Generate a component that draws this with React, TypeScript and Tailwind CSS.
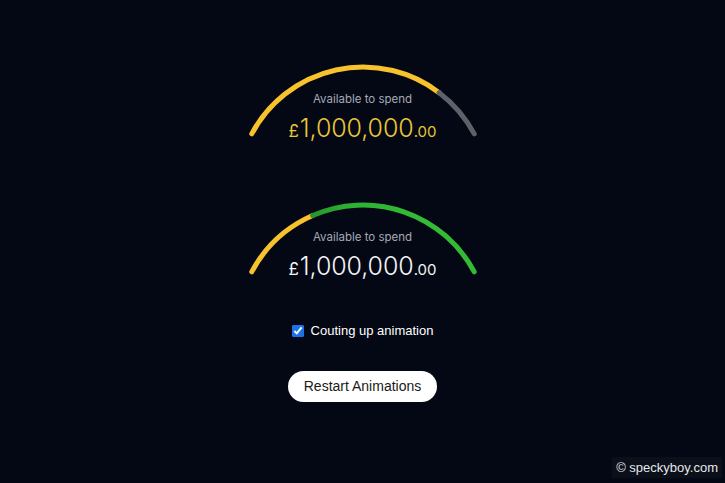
import { useState } from "react";

type Segment = { from: number; to: number; color: string };

// arc geometry in box coords (232 x 80)
const CX = 116;
const CY = 133;
const R = 126;
const SPAN = 62; // degrees from vertical each side

function point(deg: number) {
  const rad = (deg * Math.PI) / 180;
  return { x: CX + R * Math.sin(rad), y: CY - R * Math.cos(rad) };
}

function arcPath(f0: number, f1: number) {
  const a0 = -SPAN + f0 * SPAN * 2;
  const a1 = -SPAN + f1 * SPAN * 2;
  const p0 = point(a0);
  const p1 = point(a1);
  return `M ${p0.x.toFixed(2)} ${p0.y.toFixed(2)} A ${R} ${R} 0 0 1 ${p1.x.toFixed(2)} ${p1.y.toFixed(2)}`;
}

function Gauge({
  segments,
  amountClass,
}: {
  segments: Segment[];
  amountClass: string;
}) {
  return (
    <div className="relative w-[232px] h-[80px]">
      <svg
        className="absolute inset-0"
        width="232"
        height="80"
        viewBox="0 0 232 80"
        fill="none"
      >
        <defs>
          <linearGradient id="greenFade" x1="60" y1="0" x2="180" y2="0" gradientUnits="userSpaceOnUse">
            <stop offset="0" stopColor="#23922a" />
            <stop offset="0.35" stopColor="#2eb133" />
            <stop offset="1" stopColor="#33bb36" />
          </linearGradient>
        </defs>
        {segments.map((s, i) => (
          <path
            key={i}
            d={arcPath(s.from, s.to)}
            stroke={s.color}
            strokeWidth={5}
            strokeLinecap={i === 0 || i === segments.length - 1 ? "round" : "butt"}
          />
        ))}
      </svg>
      <div className="relative flex flex-col items-center pt-[32px] font-['Inter',sans-serif]">
        <p className="text-[11.5px] leading-[14px] text-[#a4a9b4]">Available to spend</p>
        <p className={`mt-[8px] flex items-baseline leading-[28px] ${amountClass}`}>
          <span className="text-[17px] font-normal mr-[1px]">£</span>
          <span className="text-[25px] font-light tracking-[-0.1px]">1,000,000</span>
          <span className="text-[15px] font-normal">.00</span>
        </p>
      </div>
    </div>
  );
}

export default function App() {
  const [counting, setCounting] = useState(true);

  return (
    <div className="relative min-h-screen h-[483px] bg-[#040814] flex flex-col items-center pt-[60px] overflow-hidden">
      <Gauge
        amountClass="text-[#e8c53a]"
        segments={[
          { from: 0, to: 0.8, color: "#f8c22c" },
          { from: 0.8, to: 1, color: "#5d6168" },
        ]}
      />
      <div className="mt-[58px]">
        <Gauge
          amountClass="text-[#f3f4f6]"
          segments={[
            { from: 0, to: 0.31, color: "#f8c22c" },
            { from: 0.31, to: 1, color: "url(#greenFade)" },
          ]}
        />
      </div>

      <label className="mt-[43px] flex items-center gap-[7px] font-['Liberation_Sans',Arial,sans-serif] text-[13px] text-white">
        <input
          type="checkbox"
          checked={counting}
          onChange={(e) => setCounting(e.target.checked)}
          className="w-[12px] h-[12px] m-0 accent-[#1a73e8]"
        />
        Couting up animation
      </label>

      <button className="mt-[30px] w-[149px] h-[31px] rounded-full bg-white text-[14px] text-[#1a1a1a] font-['Liberation_Sans',Arial,sans-serif]">
        Restart Animations
      </button>

      {/* watermark */}
      <div className="absolute right-[3px] bottom-[5px] px-[4px] py-[1px] bg-[#0e121a]/80 text-[13px] text-[#e5e7eb] font-['Liberation_Sans',Arial,sans-serif]">
        © speckyboy.com
      </div>
    </div>
  );
}
